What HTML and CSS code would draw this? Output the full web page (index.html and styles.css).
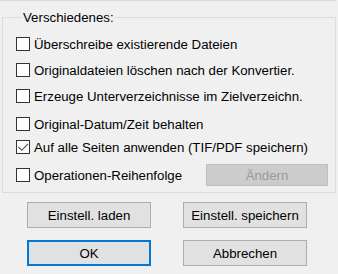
FILE: index.html
```html
<!DOCTYPE html>
<html lang="de">
<head>
    <meta charset="UTF-8">
    <title>Verschiedenes</title>
    <link rel="stylesheet" href="styles.css">
</head>
<body>
    <div class="top-rule"></div>

    <fieldset class="group">
        <legend>Verschiedenes:</legend>
        <div class="option"><span class="box"></span>Überschreibe existierende Dateien</div>
        <div class="option"><span class="box"></span>Originaldateien löschen nach der Konvertier.</div>
        <div class="option"><span class="box"></span>Erzeuge Unterverzeichnisse im Zielverzeichn.</div>
        <div class="option option-4"><span class="box"></span>Original-Datum/Zeit behalten</div>
        <div class="option option-5">
            <span class="box">
                <svg width="14" height="14" viewBox="0 0 14 14">
                    <polyline points="2.5,7 5.8,10.3 12,3.8" fill="none" stroke="#4a4a4a" stroke-width="1.1"/>
                </svg>
            </span>Auf alle Seiten anwenden (TIF/PDF speichern)
        </div>
        <div class="option option-6">
            <span class="box"></span>Operationen-Reihenfolge
            <button class="btn btn-small" disabled>Ändern</button>
        </div>
    </fieldset>

    <div class="actions">
        <button class="btn">Einstell. laden</button>
        <button class="btn">Einstell. speichern</button>
        <button class="btn btn-default">OK</button>
        <button class="btn">Abbrechen</button>
    </div>
</body>
</html>
```

FILE: styles.css
```css
body {
    margin: 0;
    background-color: #f0f0f0;
    font-family: "Liberation Sans", Arial, sans-serif;
    font-size: 13.25px;
    line-height: 15px;
    color: #000;
}
.top-rule {
    width: 336px;
    border-bottom: 1px solid #dadada;
}
.group {
    margin: 9px 2px 0 2px;
    padding: 6px 7px 6px 13px;
    border: 1px solid #dcdcdc;
    min-width: 0;
}
.group legend {
    margin-left: 6px;
    padding: 0 1px;
}
.option {
    display: flex;
    align-items: center;
    height: 26px;
}
.option-4 {
    margin-top: 2px;
}
.option-5 {
    margin-top: -3px;
}
.option-6 {
    height: 22px;
    margin-top: 4px;
}
.box {
    width: 14px;
    height: 14px;
    box-sizing: border-box;
    border: 1px solid #333;
    background-color: #fff;
    margin-right: 4px;
    display: flex;
    align-items: center;
    justify-content: center;
    flex-shrink: 0;
}
.box svg {
    display: block;
    margin: -1px;
}
.btn {
    font-family: inherit;
    font-size: 13.25px;
    color: #000;
    background-color: #e1e1e1;
    border: 1px solid #adadad;
    padding: 0;
    height: 26px;
}
.btn-default {
    border: 2px solid #0078d7;
}
.btn-small {
    margin-left: auto;
    width: 122px;
    height: 22px;
    background-color: #cccccc;
    border-color: #bfbfbf;
    color: #9a9a9a;
}
.actions {
    display: grid;
    grid-template-columns: 124px 124px;
    column-gap: 32px;
    row-gap: 12px;
    margin: 9px 0 0 27px;
}
```
